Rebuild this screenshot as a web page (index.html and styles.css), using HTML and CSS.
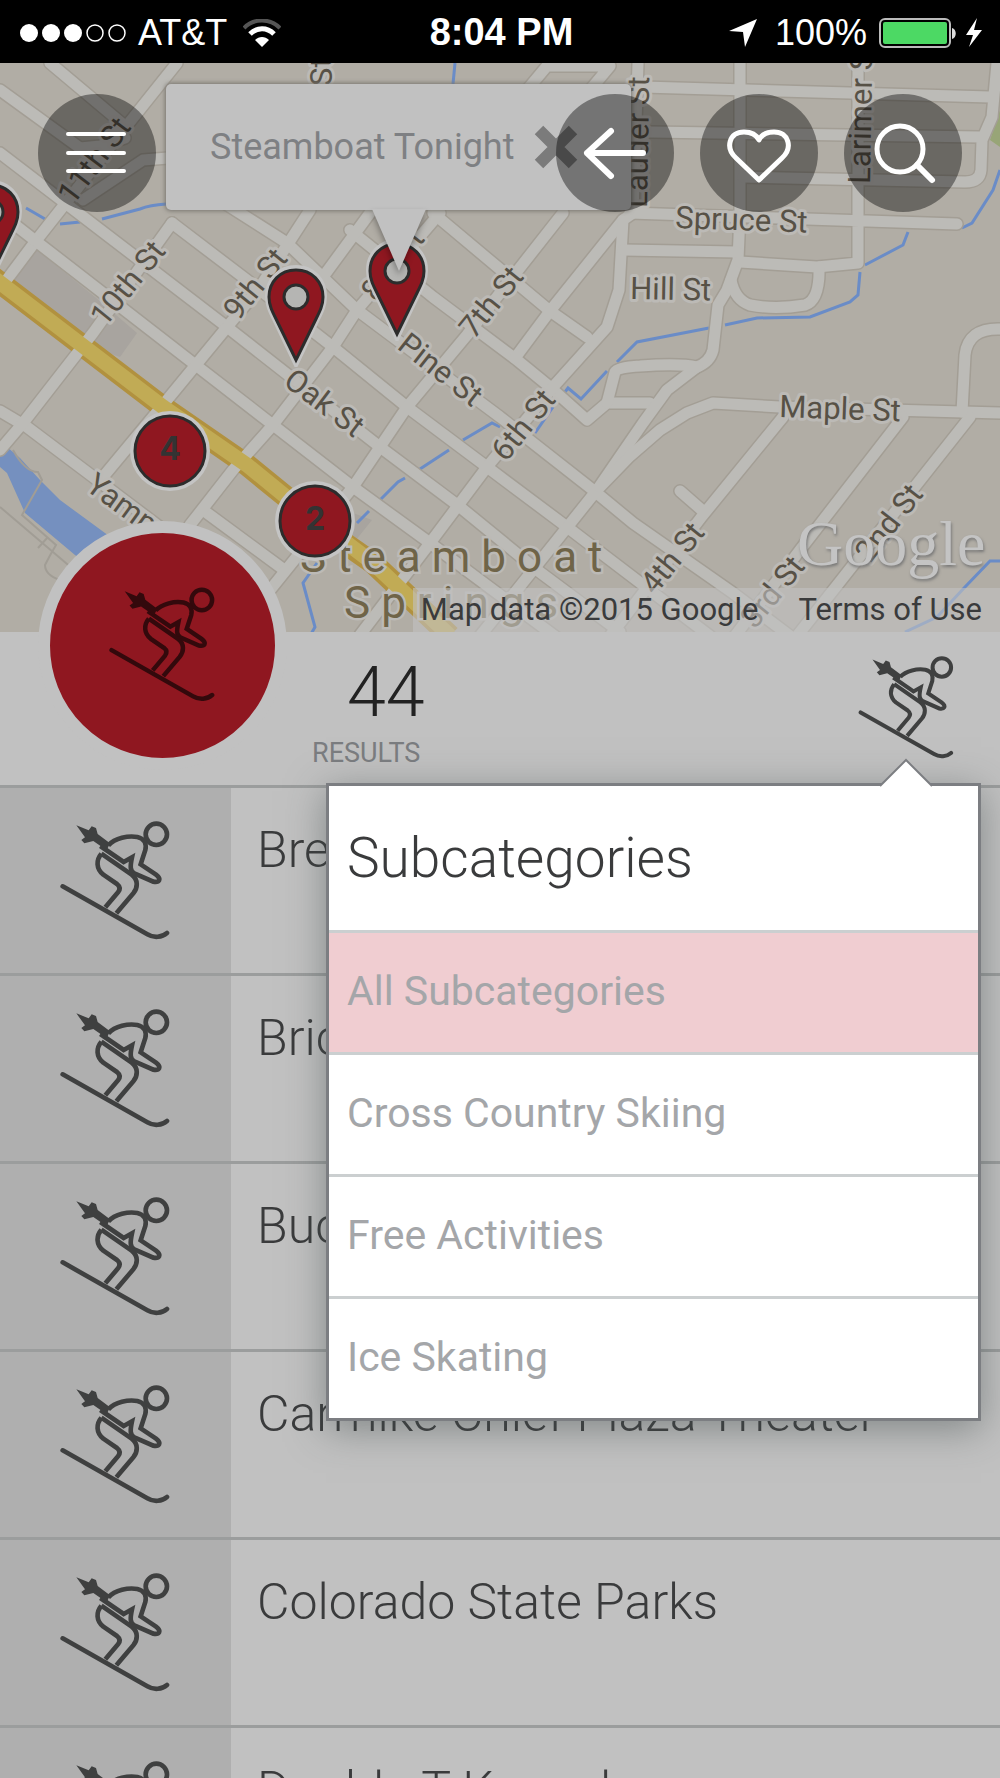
FILE: index.html
```
<!DOCTYPE html>
<html lang="en">
<head>
    <meta charset="UTF-8">
    <meta name="viewport" content="width=device-width, initial-scale=1.0">
    <title>Steamboat Activities</title>
    <link rel="stylesheet" href="styles.css">
</head>
<body>
    <!-- shared icons -->
    <svg class="sprite" aria-hidden="true">
        <symbol id="skier" viewBox="60 60 330 360">
            <g fill="none" stroke="currentColor" stroke-width="14" stroke-linejoin="round">
                <circle cx="349" cy="103" r="32"/>
                <path d="M205 136C225 114 265 106 292 111C314 116 320 132 316 150L302 193L348 224C366 238 358 248 340 245L283 220C270 213 270 200 276 172L251 186L181 138" stroke-linejoin="miter"/>
                <path d="M184 161L275 224C296 240 293 264 280 280L229 340"/>
                <path d="M184 161C168 180 168 206 190 224L231 252C241 260 241 268 234 277L196 322"/>
                <path d="M68 259L322 403C342 415 366 412 381 399" stroke-linecap="round"/>
            </g>
            <path fill="currentColor" d="M109 76L146 91L155 79L168 84L173 102L210 130L200 151L160 123L133 130L124 120L135 112Z"/>
        </symbol>
        <symbol id="pin" viewBox="0 0 62 102">
            <path d="M31 3C14 3 3 16 3 31C3 40 6 46 10 54L31 98L52 54C56 46 59 40 59 31C59 16 48 3 31 3Z" fill="#c4c4c4" stroke="#c4c4c4" stroke-width="6"/>
            <path d="M31 5C15 5 4 17 4 32C4 40 7 46 11 54L31 95L51 54C55 46 58 40 58 32C58 17 47 5 31 5Z" fill="#8f1720" stroke="#2c2c2c" stroke-width="3"/>
            <circle cx="31" cy="32" r="12" fill="#b5b5b3" stroke="#2c2c2c" stroke-width="3"/>
        </symbol>
    </svg>

    <div class="app">
        <header class="status">
            <div class="status-side">
                <svg class="signal" viewBox="0 0 106 20">
                    <g fill="#fff"><circle cx="9" cy="10" r="9"/><circle cx="31" cy="10" r="9"/><circle cx="53" cy="10" r="9"/></g>
                    <g fill="none" stroke="#fff" stroke-width="1.5"><circle cx="75" cy="10" r="8"/><circle cx="97" cy="10" r="8"/></g>
                </svg>
                <span>AT&amp;T</span>
                <svg class="wifi" viewBox="0 0 38 28">
                    <path d="M1 9C11-1 27-1 37 9" fill="none" stroke="#555" stroke-width="4"/>
                    <path d="M7 15C14 8 24 8 31 15" fill="none" stroke="#fff" stroke-width="5"/>
                    <path d="M12 21C16 17 22 17 26 21L19 28Z" fill="#fff"/>
                </svg>
            </div>
            <strong class="clock">8:04 PM</strong>
            <div class="status-side status-right">
                <svg class="locate" viewBox="0 0 28 28"><path d="M28 0L16 28L14 13L0 12Z" fill="#fff"/></svg>
                <span>100%</span>
                <svg class="battery" viewBox="0 0 104 32">
                    <rect x="1" y="2" width="70" height="28" rx="5" fill="none" stroke="#bbb" stroke-width="2"/>
                    <rect x="4" y="5" width="64" height="22" rx="2" fill="#4cd964"/>
                    <path d="M73 11C78 12 78 21 73 22Z" fill="#ddd"/>
                    <path d="M98 1L87 18H94L90 30L103 13H95Z" fill="#fff"/>
                </svg>
            </div>
        </header>

        <section class="map">
            <svg class="map-canvas" viewBox="0 63 1000 569" preserveAspectRatio="xMinYMin slice">
                <defs>
                    <g id="streets">
                        <path d="M0 90L80 148L100 146L125 138M50 63L125 126M83 200L143 160L168 158"/>
                        <path d="M177 63L125 128L35 242L8 278"/>
                        <path d="M0 153L227 327L380 447L460 507L537 570L620 632"/>
                        <path d="M0 213L37 242L193 363L273 425L353 487L430 543L560 640"/>
                        <path d="M172 223L260 290L333 347L407 407L487 467L567 527L710 636"/>
                        <path d="M215 197L287 243L357 310L500 417L593 490L633 523L733 593L790 636"/>
                        <path d="M350 230L433 297L517 360L550 387L587 420L607 403L650 403"/>
                        <path d="M433 213L550 311L587 337"/>
                        <path d="M0 411L27 427L100 482L230 580M207 513L283 569"/>
                        <path d="M172 223L93 333L23 423L0 450"/>
                        <path d="M310 210L260 287L167 400L103 477"/>
                        <path d="M370 213L323 277M440 213L357 310L333 347L273 425L233 470L190 525"/>
                        <path d="M563 213L467 335L407 407L353 487L270 590"/>
                        <path d="M623 220L550 311L515 358"/>
                        <path d="M638 63L633 213L623 220L619 290L607 327L553 387L487 467L430 543L360 635"/>
                        <path d="M740 63L740 213L738 260L727 290L718 305L713 350Q710 362 697 367L667 390L643 423L597 490L517 590L480 636"/>
                        <path d="M697 367Q680 363 640 366Q618 367 615 372L607 403"/>
                        <path d="M600 487L630 456L660 430L687 413L713 403L780 407L1000 413"/>
                        <path d="M783 417L703 515L610 636M680 491L704 512M903 417L800 550L735 636M970 417L797 636"/>
                        <path d="M962 412L965 355Q968 328 1000 329"/>
                        <path d="M643 87L990 97M650 132L980 137M743 177L965 182Q980 182 981 170L982 140L992 117L997 63"/>
                        <path d="M630 213L957 224M623 250L737 252M740 262L817 267L858 263L858 63"/>
                        <path d="M731 280Q735 300 750 305Q775 310 805 305Q820 300 819 267"/>
                        <path d="M527 90L547 66L610 66L590 90M320 63L320 90"/>
                    </g>
                </defs>
                <rect y="63" width="1000" height="569" fill="#b1ada5"/>
                <path d="M37 250L95 297L137 333L120 357L70 340L0 285Z" fill="#a8a49f"/>
                <path d="M345 510L372 520L352 545Z" fill="#a8a49f"/>
                <path d="M0 441L20 458L40 480L60 500L105 533L140 560L110 580L75 555L25 513L7 473L0 467Z" fill="#7590bf"/>
                <path d="M13 450Q25 472 38 472L42 480L22 515L56 545Q50 555 45 565Q45 575 60 580M0 507L80 575M38 548L48 537" fill="none" stroke="#a19d95" stroke-width="2"/>
                <path d="M1000 110L990 140L1000 147Z" fill="#98a577"/>
                <g fill="none" stroke="#6a8cc7" stroke-width="3">
                    <path d="M26 208L45 219M60 224L80 222M102 219L140 209Q150 205 166 204M455 63L453 84"/>
                    <path d="M1000 170L993 190L972 223L962 228M908 232L903 245L865 265M860 272L858 295L850 302L810 317L757 318L725 325M709 328L637 342L617 362M607 371L581 399L568 388L565 392M553 407L535 433"/>
                    <path d="M500 427L492 423L463 440M449 450L420 469M405 478L398 482L380 500M369 511L357 523M317 563L303 583L315 627L311 634M1000 561L990 561L965 587L937 617L905 632"/>
                </g>
                <use href="#streets" fill="none" stroke="#a39e95" stroke-width="14" stroke-linejoin="round" stroke-linecap="round"/>
                <path d="M-10 275L163 407L247 465L290 500M340 540L373 563L450 636" fill="none" stroke="#b1913f" stroke-width="22"/>
                <use href="#streets" fill="none" stroke="#bcbbb7" stroke-width="11" stroke-linejoin="round" stroke-linecap="round"/>
                <path d="M-10 275L163 407L247 465L290 500L373 563L450 636" fill="none" stroke="#c1ab55" stroke-width="15"/>

                <g class="street-name">
                    <text transform="translate(73 206) rotate(-53)">11th St</text>
                    <text transform="translate(105 328) rotate(-51)">10th St</text>
                    <text transform="translate(238 322) rotate(-51)">9th St</text>
                    <text transform="translate(376 303) rotate(-52)">8th St</text>
                    <text transform="translate(474 340) rotate(-51)">7th St</text>
                    <text transform="translate(506 463) rotate(-51)">6th St</text>
                    <text transform="translate(655 596) rotate(-51)">4th St</text>
                    <text transform="translate(755 630) rotate(-51)">3rd St</text>
                    <text transform="translate(870 564) rotate(-52)">2nd St</text>
                    <text transform="translate(282 384) rotate(37)">Oak St</text>
                    <text transform="translate(396 348) rotate(38)">Pine St</text>
                    <text transform="translate(84 489) rotate(36)">Yampa St</text>
                    <text transform="translate(675 228) rotate(2)">Spruce St</text>
                    <text transform="translate(630 299) rotate(1)">Hill St</text>
                    <text transform="translate(779 417) rotate(2)">Maple St</text>
                    <text transform="translate(647 208) rotate(-89)">Lauder St</text>
                    <text transform="translate(870 184) rotate(-89)">Larimer St</text>
                    <text transform="translate(332 86) rotate(-90)">St</text>
                </g>
                <g class="town-name">
                    <text x="300" y="572">Steamboat</text>
                    <text x="344" y="618">Springs</text>
                </g>

                <use href="#pin" x="-40" y="180" width="62" height="102"/>
                <use href="#pin" x="265" y="265" width="62" height="102"/>
                <use href="#pin" x="366" y="239" width="62" height="102"/>
                <g class="cluster">
                    <circle class="cluster-halo" cx="170" cy="451" r="40"/>
                    <circle cx="170" cy="451" r="35"/>
                    <text x="170" y="460">4</text>
                    <circle class="cluster-halo" cx="315" cy="521" r="40"/>
                    <circle cx="315" cy="521" r="35"/>
                    <text x="315" y="530">2</text>
                </g>
                <text class="google" x="797" y="565">Google</text>
            </svg>

            <div class="callout">
                <span>Steamboat Tonight</span>
                <svg class="callout-close" viewBox="0 0 44 44"><path d="M5 5L39 39M39 5L5 39" stroke="#7b7b7b" stroke-width="12"/></svg>
                <svg class="callout-tail" viewBox="0 0 54 62"><path d="M0 0H54L27 62Z" fill="#c1c1c1"/></svg>
            </div>

            <nav class="toolbar">
                <button class="round" aria-label="Menu">
                    <svg viewBox="0 0 118 118"><path d="M30 40H86M30 59H86M30 77H86" stroke-width="4"/></svg>
                </button>
                <div class="toolbar-group">
                    <button class="round" aria-label="Back">
                        <svg viewBox="0 0 118 118"><path d="M87 59H31M55 37L31 59L55 82" stroke-width="6"/></svg>
                    </button>
                    <button class="round" aria-label="Favorites">
                        <svg viewBox="0 0 118 118"><path d="M59 86L36 64C25 54 29 38 44 38C52 38 57 42 59 46C61 42 66 38 74 38C89 38 93 54 82 64Z" stroke-width="5"/></svg>
                    </button>
                    <button class="round" aria-label="Search">
                        <svg viewBox="0 0 118 118"><circle cx="56" cy="55" r="23" stroke-width="5"/><path d="M73 71L88 86" stroke-width="6"/></svg>
                    </button>
                </div>
            </nav>

            <div class="attribution">
                <span>Map data ©2015 Google</span>
                <a href="#">Terms of Use</a>
            </div>
        </section>

        <section class="summary">
            <div class="badge"><svg><use href="#skier"/></svg></div>
            <div class="count">
                <span class="count-number">44</span>
                <span class="count-label">RESULTS</span>
            </div>
            <button class="filter" aria-label="Subcategories"><svg><use href="#skier"/></svg></button>

            <div class="popup">
                <svg class="popup-arrow" viewBox="0 0 52 29"><path d="M0 28L26 2L52 28" fill="#fff" stroke="#7c7e82" stroke-width="2"/></svg>
                <h2>Subcategories</h2>
                <button class="option selected">All Subcategories</button>
                <button class="option">Cross Country Skiing</button>
                <button class="option">Free Activities</button>
                <button class="option">Ice Skating</button>
            </div>
        </section>

        <ul class="results">
            <li><span class="thumb"><svg><use href="#skier"/></svg></span><span class="name">Bre</span></li>
            <li><span class="thumb"><svg><use href="#skier"/></svg></span><span class="name">Bric</span></li>
            <li><span class="thumb"><svg><use href="#skier"/></svg></span><span class="name">Buc</span></li>
            <li><span class="thumb"><svg><use href="#skier"/></svg></span><span class="name">Carmike Chief Plaza Theater</span></li>
            <li><span class="thumb"><svg><use href="#skier"/></svg></span><span class="name">Colorado State Parks</span></li>
            <li><span class="thumb"><svg><use href="#skier"/></svg></span><span class="name">Double T Kennel</span></li>
        </ul>
    </div>
</body>
</html>
```
FILE: styles.css
```
*{margin: 0;padding: 0;box-sizing: border-box;}

body{
    background-color: #c1c1c1;
    font-family: Roboto, "Liberation Sans", sans-serif;
    font-weight: 300;
    color: #3a3b3c;
}

button{
    border: 0;
    background: none;
    font-family: inherit;
    cursor: pointer;
}

svg{display: block;}
.sprite{position: absolute;width: 0;height: 0;}

.app{
    height: 100vh;
    display: flex;
    flex-direction: column;
    overflow: hidden;
}

/* status bar */
.status{
    flex: none;
    height: 63px;
    padding: 2px 17px 0 20px;
    display: flex;
    align-items: center;
    background-color: #000;
    color: #fff;
    font-family: "Liberation Sans", Arial, sans-serif;
    font-size: 36px;
}
.clock{font-size: 38px;font-weight: bold;}
.status-side{
    flex: 1;
    display: flex;
    align-items: center;
    gap: 12px;
}
.status-right{justify-content: flex-end;}
.signal{width: 106px;height: 20px;}
.wifi{width: 38px;height: 28px;margin-left: 4px;}
.locate{width: 28px;height: 28px;margin-right: 6px;}
.battery{width: 104px;height: 32px;}

/* map */
.map{
    flex: none;
    position: relative;
    height: 569px;
    overflow: hidden;
}
.map-canvas{width: 100%;height: 100%;}
.street-name text{
    font-family: Roboto, sans-serif;
    font-size: 31px;
    font-weight: 400;
    fill: #575146;
    stroke: #bcbab6;
    stroke-width: 6px;
    stroke-linejoin: round;
    paint-order: stroke;
}
.town-name text{
    font-family: Roboto, sans-serif;
    font-size: 44px;
    font-weight: 400;
    letter-spacing: 11px;
    fill: #6f6448;
    stroke: #bcbab6;
    stroke-width: 5px;
    paint-order: stroke;
}
.cluster circle{
    fill: #8f1720;
    stroke: #2c2c2c;
    stroke-width: 3px;
}
.cluster .cluster-halo{
    fill: #c4c4c4;
    stroke: none;
}
.cluster text{
    font: bold 32px Inter, "Liberation Sans", sans-serif;
    fill: #333;
    text-anchor: middle;
}
.google{
    font: 64px "Liberation Serif", serif;
    fill: #c4c4c4;
    text-shadow: 1px 2px 3px #777;
}

.callout{
    position: absolute;
    top: 21px;
    left: 166px;
    width: 465px;
    height: 126px;
    padding: 0 53px 0 44px;
    display: flex;
    align-items: center;
    justify-content: space-between;
    border-radius: 5px;
    background-color: #c1c1c1;
    box-shadow: 0 0 4px 1px #77746e;
    color: #7e8083;
    font-size: 36px;
    font-weight: 400;
    white-space: nowrap;
}
.callout-close{flex: none;width: 44px;height: 44px;}
.callout-tail{
    position: absolute;
    top: 125px;
    left: 206px;
    width: 54px;
    height: 62px;
    overflow: visible;
    filter: drop-shadow(0 4px 3px rgba(0,0,0,.35));
}

.toolbar{
    position: absolute;
    top: 31px;
    left: 0;
    width: 100%;
    padding: 0 38px;
    display: flex;
    justify-content: space-between;
}
.toolbar-group{display: flex;gap: 26px;}
.round{
    width: 118px;
    height: 118px;
    border-radius: 50%;
    background-color: rgba(0,0,0,.4);
}
.round svg{
    fill: none;
    stroke: #fff;
    stroke-linecap: round;
    stroke-linejoin: round;
}

.attribution{
    position: absolute;
    right: 0;
    bottom: 0;
    height: 44px;
    padding: 0 18px 2px 8px;
    display: flex;
    align-items: center;
    gap: 40px;
    background-color: rgba(193,193,193,.6);
    font-size: 31px;
    font-weight: 400;
}
.attribution a{color: inherit;text-decoration: none;}

/* category summary */
.summary{
    flex: none;
    position: relative;
    height: 153px;
    padding: 0 46px 0 38px;
    display: flex;
    align-items: flex-start;
    background-color: #c1c1c1;
}
.badge{
    width: 249px;
    height: 249px;
    margin-top: -111px;
    padding: 53px 59px;
    border: 12px solid #c1c1c1;
    border-radius: 50%;
    background-color: #8f1720;
    color: #33090c;
}
.badge svg{width: 106px;height: 116px;}
.count{
    margin-left: 25px;
    display: flex;
    flex-direction: column;
}
.count-number{
    margin-top: 18px;
    padding-left: 35px;
    font-size: 70px;
    line-height: 84px;
    color: #222;
}
.count-label{
    font-size: 27px;
    line-height: 38px;
    font-weight: 400;
    color: #7b7d80;
}
.filter{
    margin: 23px 0 0 auto;
    color: #3f4040;
}
.filter svg{width: 96px;height: 104px;}

.popup{
    position: absolute;
    z-index: 1;
    top: 151px;
    right: 19px;
    width: 655px;
    border: 3px solid #7c7e82;
    background-color: #fff;
    box-shadow: 0 8px 36px rgba(70,80,80,.5);
}
.popup-arrow{
    position: absolute;
    top: -28px;
    right: 46px;
    width: 52px;
    height: 29px;
}
.popup h2{
    padding-left: 18px;
    font-size: 55px;
    font-weight: 300;
    line-height: 144px;
}
.option{
    display: block;
    width: 100%;
    height: 122px;
    padding: 0 18px 4px;
    border-top: 3px solid #cbcfd0;
    font-size: 41px;
    text-align: left;
    color: #a4a6a9;
}
.selected{background-color: #f0cdd1;}

/* result list */
.results{
    flex: 1;
    overflow: hidden;
    list-style: none;
}
.results li{
    height: 188px;
    display: flex;
    border-top: 3px solid #9b9d9d;
}
.thumb{
    flex: none;
    width: 231px;
    padding: 32px 60px;
    background-color: #afafaf;
    color: #3f4040;
}
.thumb svg{width: 110px;height: 120px;}
.name{
    padding: 26px 0 0 26px;
    font-size: 50px;
    line-height: 72px;
    white-space: nowrap;
}
```
